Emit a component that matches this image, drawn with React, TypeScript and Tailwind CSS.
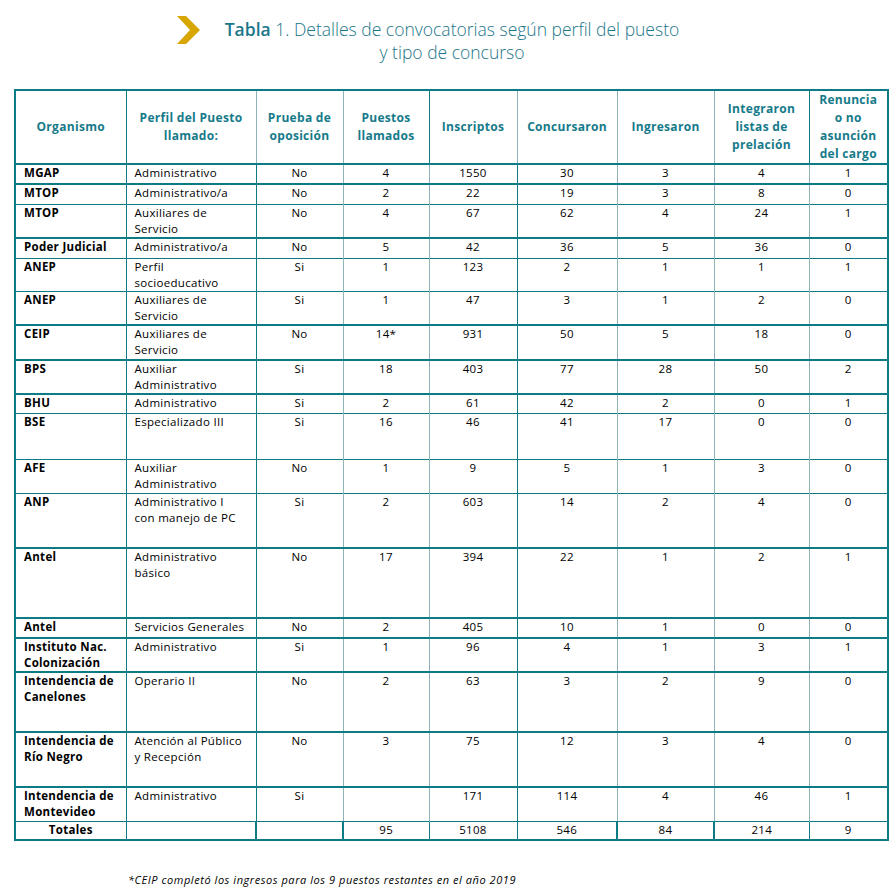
import React from 'react';

type Row = {
  org: string[];
  perfil: string[];
  prueba: string;
  puestos: string;
  insc: string;
  conc: string;
  ingr: string;
  integ: string;
  ren: string;
  h: string;
  thick?: boolean;
};

const rows: Row[] = [
  { org: ['MGAP'], perfil: ['Administrativo'], prueba: 'No', puestos: '4', insc: '1550', conc: '30', ingr: '3', integ: '4', ren: '1', h: 'h-[20px]', thick: true },
  { org: ['MTOP'], perfil: ['Administrativo/a'], prueba: 'No', puestos: '2', insc: '22', conc: '19', ingr: '3', integ: '8', ren: '0', h: 'h-[20px]' },
  { org: ['MTOP'], perfil: ['Auxiliares de', 'Servicio'], prueba: 'No', puestos: '4', insc: '67', conc: '62', ingr: '4', integ: '24', ren: '1', h: 'h-[34px]', thick: true },
  { org: ['Poder Judicial'], perfil: ['Administrativo/a'], prueba: 'No', puestos: '5', insc: '42', conc: '36', ingr: '5', integ: '36', ren: '0', h: 'h-[20px]' },
  { org: ['ANEP'], perfil: ['Perfil', 'socioeducativo'], prueba: 'Si', puestos: '1', insc: '123', conc: '2', ingr: '1', integ: '1', ren: '1', h: 'h-[33px]' },
  { org: ['ANEP'], perfil: ['Auxiliares de', 'Servicio'], prueba: 'Si', puestos: '1', insc: '47', conc: '3', ingr: '1', integ: '2', ren: '0', h: 'h-[34px]', thick: true },
  { org: ['CEIP'], perfil: ['Auxiliares de', 'Servicio'], prueba: 'No', puestos: '14*', insc: '931', conc: '50', ingr: '5', integ: '18', ren: '0', h: 'h-[35px]', thick: true },
  { org: ['BPS'], perfil: ['Auxiliar', 'Administrativo'], prueba: 'Si', puestos: '18', insc: '403', conc: '77', ingr: '28', integ: '50', ren: '2', h: 'h-[34px]', thick: true },
  { org: ['BHU'], perfil: ['Administrativo'], prueba: 'Si', puestos: '2', insc: '61', conc: '42', ingr: '2', integ: '0', ren: '1', h: 'h-[19px]' },
  { org: ['BSE'], perfil: ['Especializado III'], prueba: 'Si', puestos: '16', insc: '46', conc: '41', ingr: '17', integ: '0', ren: '0', h: 'h-[46px]' },
  { org: ['AFE'], perfil: ['Auxiliar', 'Administrativo'], prueba: 'No', puestos: '1', insc: '9', conc: '5', ingr: '1', integ: '3', ren: '0', h: 'h-[34px]' },
  { org: ['ANP'], perfil: ['Administrativo I', 'con manejo de PC'], prueba: 'Si', puestos: '2', insc: '603', conc: '14', ingr: '2', integ: '4', ren: '0', h: 'h-[55px]', thick: true },
  { org: ['Antel'], perfil: ['Administrativo', 'básico'], prueba: 'No', puestos: '17', insc: '394', conc: '22', ingr: '1', integ: '2', ren: '1', h: 'h-[70px]', thick: true },
  { org: ['Antel'], perfil: ['Servicios Generales'], prueba: 'No', puestos: '2', insc: '405', conc: '10', ingr: '1', integ: '0', ren: '0', h: 'h-[20px]', thick: true },
  { org: ['Instituto Nac.', 'Colonización'], perfil: ['Administrativo'], prueba: 'Si', puestos: '1', insc: '96', conc: '4', ingr: '1', integ: '3', ren: '1', h: 'h-[34px]', thick: true },
  { org: ['Intendencia de', 'Canelones'], perfil: ['Operario II'], prueba: 'No', puestos: '2', insc: '63', conc: '3', ingr: '2', integ: '9', ren: '0', h: 'h-[60px]', thick: true },
  { org: ['Intendencia de', 'Río Negro'], perfil: ['Atención al Público', 'y Recepción'], prueba: 'No', puestos: '3', insc: '75', conc: '12', ingr: '3', integ: '4', ren: '0', h: 'h-[55px]', thick: true },
  { org: ['Intendencia de', 'Montevideo'], perfil: ['Administrativo'], prueba: 'Si', puestos: '', insc: '171', conc: '114', ingr: '4', integ: '46', ren: '1', h: 'h-[34px]' },
];

const teal = 'border-[#0c7b86]';
const gray = 'border-[#8fb3ba]';

const Lines: React.FC<{ items: string[] }> = ({ items }) => (
  <>
    {items.map((t, i) => (
      <div key={i}>{t}</div>
    ))}
  </>
);

const App: React.FC = () => {
  const num = 'text-center align-top p-0';
  const txt = 'align-top pl-[8px] pr-0 py-0';
  return (
    <div className="w-[895px] h-[893px] bg-white font-['Open_Sans',sans-serif] text-black">
      {/* Title */}
      <div className="relative pt-[18px] h-[89px]">
        <svg className="absolute left-[177px] top-[16px]" width="23" height="28" viewBox="0 0 23 28">
          <polygon points="0,0 9,0 23,14 9,28 0,28 13,14" fill="#d8a600" />
        </svg>
        <div className="ml-[220px] w-[464px] text-center whitespace-nowrap text-[17.5px] leading-[23px] text-[#1b7689] font-['Open_Sans',sans-serif] font-light">
          <span className="font-semibold">Tabla</span> 1. Detalles de convocatorias según perfil del puesto
          <br />y tipo de concurso
        </div>
      </div>

      {/* Table */}
      <table className={`ml-[14px] w-[873px] border-collapse table-fixed border-2 ${teal} text-[11.5px] leading-[16px] tracking-[0.3px]`}>
        <colgroup>
          <col className="w-[111px]" />
          <col className="w-[130px]" />
          <col className="w-[87px]" />
          <col className="w-[86px]" />
          <col className="w-[88px]" />
          <col className="w-[100px]" />
          <col className="w-[97px]" />
          <col className="w-[95px]" />
          <col className="w-[79px]" />
        </colgroup>
        <thead>
          <tr className={`h-[72px] border-b-2 ${teal} text-[#167a8a] font-bold text-[12px] leading-[18px]`}>
            <th className={`border-r ${teal} font-bold p-0`}>Organismo</th>
            <th className={`border-r ${gray} font-bold p-0`}>Perfil del Puesto<br />llamado:</th>
            <th className={`border-r ${gray} font-bold p-0`}>Prueba de<br />oposición</th>
            <th className={`border-r ${teal} font-bold p-0`}>Puestos<br />llamados</th>
            <th className={`border-r ${gray} font-bold p-0`}>Inscriptos</th>
            <th className={`border-r ${gray} font-bold p-0`}>Concursaron</th>
            <th className={`border-r ${gray} font-bold p-0`}>Ingresaron</th>
            <th className={`border-r ${teal} font-bold p-0`}>Integraron<br />listas de<br />prelación</th>
            <th className="font-bold p-0">Renuncia<br />o no<br />asunción<br />del cargo</th>
          </tr>
        </thead>
        <tbody>
          {rows.map((r, i) => (
            <tr key={i} className={`${r.h} ${r.thick ? 'border-b-2' : 'border-b'} ${teal}`}>
              <td className={`border-r ${teal} ${txt} font-bold`}><Lines items={r.org} /></td>
              <td className={`border-r ${teal} ${txt}`}><Lines items={r.perfil} /></td>
              <td className={`border-r ${gray} ${num}`}>{r.prueba}</td>
              <td className={`border-r ${gray} ${num}`}>{r.puestos}</td>
              <td className={`border-r ${teal} ${num}`}>{r.insc}</td>
              <td className={`border-r ${gray} ${num}`}>{r.conc}</td>
              <td className={`border-r ${gray} ${num}`}>{r.ingr}</td>
              <td className={`border-r ${gray} ${num}`}>{r.integ}</td>
              <td className={num}>{r.ren}</td>
            </tr>
          ))}
          <tr className={`h-[19px] border-b-2 ${teal}`}>
            <td className={`border-r ${teal} text-center align-top font-bold p-0`}>Totales</td>
            <td className={`border-r-2 ${teal} p-0`}></td>
            <td className={`border-r-2 ${teal} p-0`}></td>
            <td className={`border-r ${teal} ${num}`}>95</td>
            <td className={`border-r ${teal} ${num}`}>5108</td>
            <td className={`border-r-2 ${teal} ${num}`}>546</td>
            <td className={`border-r-2 ${teal} ${num}`}>84</td>
            <td className={`border-r ${teal} ${num}`}>214</td>
            <td className={num}>9</td>
          </tr>
        </tbody>
      </table>

      {/* Footnote */}
      <div className="ml-[128px] mt-[31px] text-[11px] italic tracking-[0.55px]">
        *CEIP completó los ingresos para los 9 puestos restantes en el año 2019
      </div>
    </div>
  );
};

export default App;
